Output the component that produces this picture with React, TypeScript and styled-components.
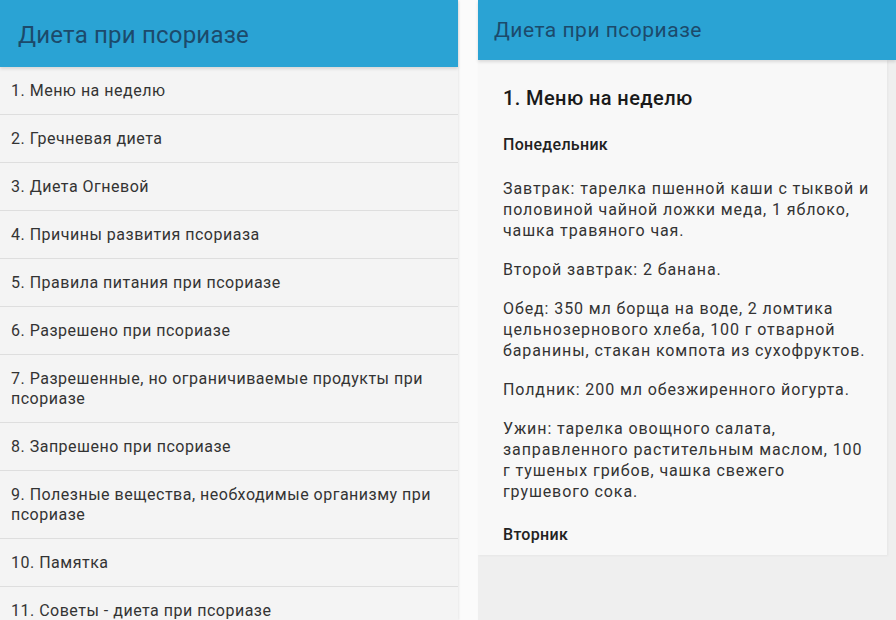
import React from "react";
import styled, { createGlobalStyle } from "styled-components";

const GlobalStyle = createGlobalStyle`
  html, body {
    margin: 0;
    padding: 0;
    background: #ffffff;
  }
  body {
    font-family: Roboto, "Noto Sans", "Liberation Sans", sans-serif;
  }
`;

const Page = styled.div`
  display: flex;
  width: 896px;
  height: 620px;
  overflow: hidden;
  gap: 20px;
  background: #fbfbfb;
`;

const Screen = styled.div<{ $width?: number }>`
  display: flex;
  flex-direction: column;
  width: ${(p) => (p.$width ? `${p.$width}px` : "auto")};
  flex: ${(p) => (p.$width ? "none" : "1")};
  background: #efefef;
  box-shadow: 1px 0 2px rgba(0, 0, 0, 0.08);
`;

const AppBar = styled.div<{ $height: number; $size: number; $left: number }>`
  display: flex;
  align-items: center;
  height: ${(p) => p.$height}px;
  padding-left: ${(p) => p.$left}px;
  padding-top: ${(p) => (p.$size > 22 ? 3 : 0)}px;
  box-sizing: border-box;
  background: #2aa3d4;
  color: #1c4a6b;
  font-size: ${(p) => p.$size}px;
  letter-spacing: ${(p) => (p.$size > 22 ? 0.2 : 0.5)}px;
  flex: none;
  box-shadow: 0 2px 3px rgba(0, 0, 0, 0.12);
  position: relative;
  z-index: 1;
`;

const List = styled.div`
  display: flex;
  flex-direction: column;
  background: #f4f4f4;
  flex: 1;
`;

const Row = styled.div`
  padding: 14px 11px 13px;
  border-bottom: 1px solid #dedede;
  font-size: 16px;
  letter-spacing: 0.5px;
  line-height: 20px;
  color: #333333;
`;

const Card = styled.div`
  margin-right: 9px;
  padding: 26px 16px 10px 25px;
  background: #f8f8f8;
  color: #2a2a2a;
  box-shadow: 1px 1px 2px rgba(0, 0, 0, 0.04);
`;

const Heading = styled.div`
  font-size: 20px;
  font-weight: 500;
  letter-spacing: 0.4px;
  line-height: 24px;
  color: #1a1a1a;
  margin-bottom: 25px;
`;

const DayTitle = styled.div<{ $top?: number; $bottom?: number }>`
  margin-top: ${(p) => p.$top ?? 0}px;
  margin-bottom: ${(p) => p.$bottom ?? 23}px;
  font-size: 16px;
  font-weight: 500;
  letter-spacing: 0.3px;
  line-height: 20px;
  color: #222222;
`;

const Para = styled.p`
  margin: 0 0 18px;
  font-size: 16px;
  letter-spacing: 0.9px;
  line-height: 21px;
  color: #333333;
`;

const items = [
  "1. Меню на неделю",
  "2. Гречневая диета",
  "3. Диета Огневой",
  "4. Причины развития псориаза",
  "5. Правила питания при псориазе",
  "6. Разрешено при псориазе",
  "7. Разрешенные, но ограничиваемые продукты при псориазе",
  "8. Запрешено при псориазе",
  "9. Полезные вещества, необходимые организму при псориазе",
  "10. Памятка",
  "11. Советы - диета при псориазе",
];

const meals = [
  "Завтрак: тарелка пшенной каши с тыквой и половиной чайной ложки меда, 1 яблоко, чашка травяного чая.",
  "Второй завтрак: 2 банана.",
  "Обед: 350 мл борща на воде, 2 ломтика цельнозернового хлеба, 100 г отварной баранины, стакан компота из сухофруктов.",
  "Полдник: 200 мл обезжиренного йогурта.",
  "Ужин: тарелка овощного салата, заправленного растительным маслом, 100 г тушеных грибов, чашка свежего грушевого сока.",
];

export default function App() {
  return (
    <>
      <GlobalStyle />
      <Page>
        <Screen $width={458}>
          <AppBar $height={67} $size={24} $left={18}>
            Диета при псориазе
          </AppBar>
          <List>
            {items.map((item) => (
              <Row key={item}>{item}</Row>
            ))}
          </List>
        </Screen>
        <Screen>
          <AppBar $height={60} $size={21} $left={16}>
            Диета при псориазе
          </AppBar>
          <Card>
            <Heading>1. Меню на неделю</Heading>
            <DayTitle>Понедельник</DayTitle>
            {meals.map((m) => (
              <Para key={m}>{m}</Para>
            ))}
            <DayTitle $top={23} $bottom={0}>
              Вторник
            </DayTitle>
          </Card>
        </Screen>
      </Page>
    </>
  );
}
